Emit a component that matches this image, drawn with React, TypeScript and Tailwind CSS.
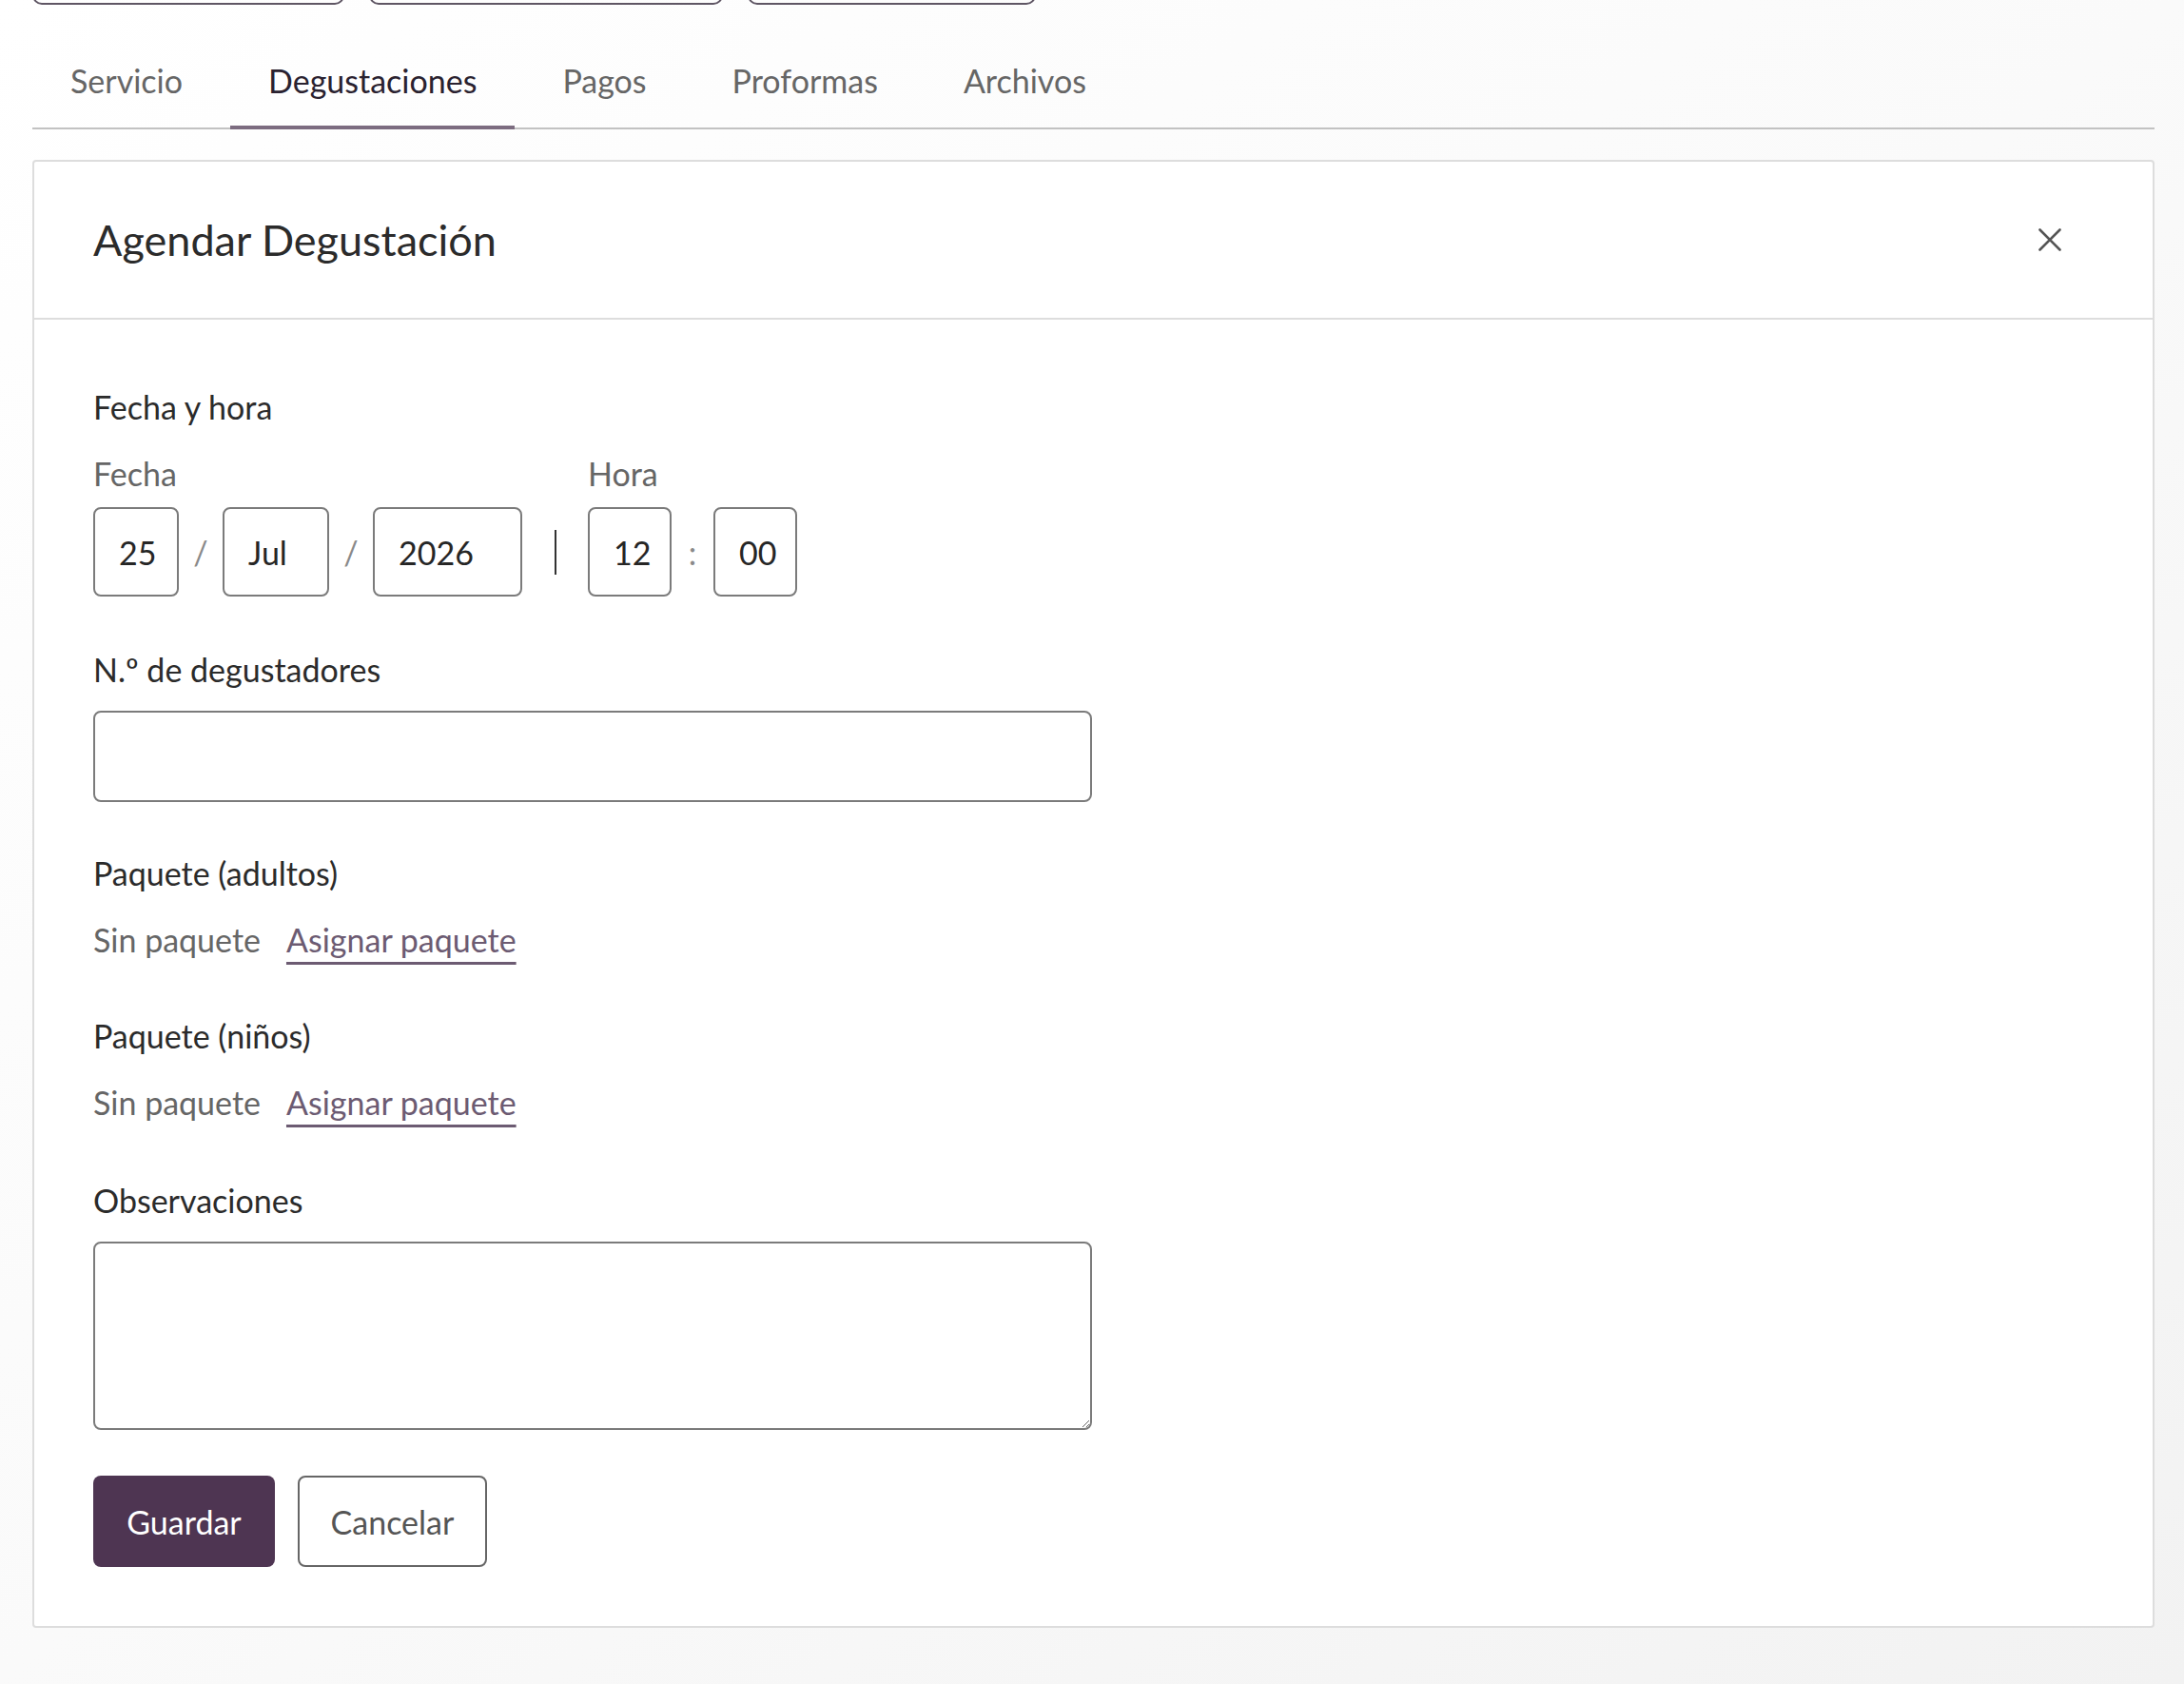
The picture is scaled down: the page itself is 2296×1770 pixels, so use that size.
import React from 'react';

const tabs = ['Servicio', 'Degustaciones', 'Pagos', 'Proformas', 'Archivos'];

function Box({ value, w }: { value: string; w: string }) {
  return (
    <div className={`${w} h-[94px] flex items-center pl-[25px] border-2 border-[#7b7b7b] rounded-[8px] bg-white text-[#262626]`}>
      {value}
    </div>
  );
}

function Sep({ ch, w }: { ch: string; w: string }) {
  return <span className={`${w} text-center text-[#8a8a8a]`}>{ch}</span>;
}

function Paquete({ label }: { label: string }) {
  return (
    <div>
      <div className="leading-[44px] text-[#2b2b2b]">{label}</div>
      <div className="mt-[26px] flex items-center gap-[27px] leading-[44px]">
        <span className="text-[#666]">Sin paquete</span>
        <a href="#" className="text-[#6c5b72] underline decoration-[3px] underline-offset-[10px] decoration-[#6c5b72]">
          Asignar paquete
        </a>
      </div>
    </div>
  );
}

export default function App() {
  return (
    <div
      className="flow-root min-h-screen bg-gradient-to-br from-white via-[#fafafa] to-[#f2f2f2] pl-[34px] pr-[31px] text-[34px]"
      style={{ fontFamily: 'Lato, "Open Sans", sans-serif' }}
    >
      {/* top buttons, cut off by the viewport */}
      <div className="flex -mt-[40px]">
        <div className="w-[328px] h-[45px] border-2 border-[#5f5664] rounded-[10px]" />
        <div className="ml-[26px] w-[372px] h-[45px] border-2 border-[#5f5664] rounded-[10px]" />
        <div className="ml-[26px] w-[303px] h-[45px] border-2 border-[#5f5664] rounded-[10px]" />
      </div>

      {/* tabs */}
      <div className="flex gap-[10px] border-b-2 border-[#c2c2c2]">
        {tabs.map((t) => (
          <button
            key={t}
            className={`-mb-[2px] px-[40px] pt-[58px] pb-[25px] leading-[44px] border-b-4 ${
              t === 'Degustaciones' ? 'border-[#7c6c80] text-[#2a2230]' : 'border-transparent text-[#666]'
            }`}
          >
            {t}
          </button>
        ))}
      </div>

      {/* card */}
      <div className="mt-[32px] bg-white border-2 border-[#dddddd] rounded-[4px]">
        <div className="h-[166px] flex items-center justify-between pl-[62px] pr-[96px] border-b-2 border-[#dddddd]">
          <h2 className="text-[45px] leading-[60px] text-[#2b2b2b]">Agendar Degustación</h2>
          <svg width="24" height="24" viewBox="0 0 24 24" className="text-[#555]">
            <path d="M1.5 1.5 22.5 22.5M22.5 1.5 1.5 22.5" stroke="currentColor" strokeWidth="2.6" strokeLinecap="round" />
          </svg>
        </div>

        <div className="px-[62px] pt-[70px] pb-[62px]">
          <div className="leading-[44px] text-[#2b2b2b]">Fecha y hora</div>

          <div className="mt-[26px] flex items-end">
            <div>
              <div className="leading-[44px] text-[#666]">Fecha</div>
              <div className="mt-[13px] flex items-center">
                <Box value="25" w="w-[90px]" />
                <Sep ch="/" w="w-[46px]" />
                <Box value="Jul" w="w-[112px]" />
                <Sep ch="/" w="w-[46px]" />
                <Box value="2026" w="w-[157px]" />
              </div>
            </div>
            <div className="w-[69px] h-[94px] flex items-center justify-center">
              <div className="w-[2px] h-[47px] bg-[#333]" />
            </div>
            <div>
              <div className="leading-[44px] text-[#666]">Hora</div>
              <div className="mt-[13px] flex items-center">
                <Box value="12" w="w-[88px]" />
                <Sep ch=":" w="w-[44px]" />
                <Box value="00" w="w-[88px]" />
              </div>
            </div>
          </div>

          <div className="mt-[55px] leading-[44px] text-[#2b2b2b]">N.º de degustadores</div>
          <input
            type="text"
            className="mt-[21px] block w-[1050px] h-[96px] border-2 border-[#7b7b7b] rounded-[8px] px-[20px] outline-none"
          />

          <div className="mt-[53px]">
            <Paquete label="Paquete (adultos)" />
          </div>
          <div className="mt-[57px]">
            <Paquete label="Paquete (niños)" />
          </div>

          <div className="mt-[59px] leading-[44px] text-[#2b2b2b]">Observaciones</div>
          <textarea className="mt-[21px] block w-[1050px] h-[198px] border-2 border-[#7b7b7b] rounded-[8px] px-[20px] py-[14px] outline-none" />

          <div className="mt-[48px] flex gap-[24px]">
            <button className="w-[191px] h-[96px] rounded-[8px] bg-[#4e3552] text-white">Guardar</button>
            <button className="w-[199px] h-[96px] rounded-[8px] border-2 border-[#666] bg-white text-[#555]">Cancelar</button>
          </div>
        </div>
      </div>
    </div>
  );
}
